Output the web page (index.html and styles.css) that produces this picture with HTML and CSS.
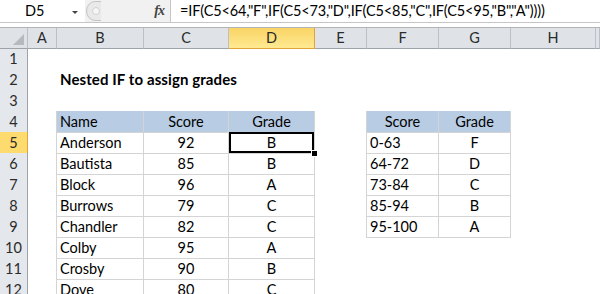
FILE: index.html
```html
<!DOCTYPE html>
<html lang="en">
<head>
    <meta charset="UTF-8">
    <title>Nested IF to assign grades</title>
    <link rel="stylesheet" href="styles.css">
</head>
<body>
    <div class="fbar">
        <div class="namebox">
            <span class="ref">D5</span>
            <span class="drop"></span>
        </div>
        <div class="fbtools">
            <svg class="grip" width="16" height="20" viewBox="0 0 16 20">
                <path d="M15 0.5 H9 A8.5 9.5 0 0 0 9 19.5 H15" fill="#e9e9e9" stroke="#c4c4c4"/>
                <circle cx="10" cy="10" r="3.5" fill="#f6f6f6" stroke="#d2d2d2"/>
            </svg>
            <span class="fx">fx</span>
        </div>
        <div class="formula">=IF(C5&lt;64,"F",IF(C5&lt;73,"D",IF(C5&lt;85,"C",IF(C5&lt;95,"B","A"))))</div>
    </div>
    <div class="fgap"></div>

    <div class="sheet">
        <div class="row colheads">
            <div class="corner"></div>
            <div class="ch">A</div>
            <div class="ch">B</div>
            <div class="ch">C</div>
            <div class="ch active">D</div>
            <div class="ch">E</div>
            <div class="ch">F</div>
            <div class="ch">G</div>
            <div class="ch">H</div>
            <div class="ch"></div>
        </div>

        <div class="row">
            <div class="rh">1</div>
            <div class="c"></div><div class="c"></div><div class="c"></div><div class="c"></div>
            <div class="c"></div><div class="c"></div><div class="c"></div><div class="c"></div><div class="c"></div>
        </div>
        <div class="row">
            <div class="rh">2</div>
            <div class="c"></div>
            <div class="c title">Nested IF to assign grades</div>
            <div class="c"></div><div class="c"></div><div class="c"></div>
            <div class="c"></div><div class="c"></div><div class="c"></div><div class="c"></div>
        </div>
        <div class="row">
            <div class="rh">3</div>
            <div class="c"></div>
            <div class="c tt"></div><div class="c tt"></div><div class="c tt"></div>
            <div class="c"></div>
            <div class="c tt"></div><div class="c tt"></div>
            <div class="c"></div><div class="c"></div>
        </div>
        <div class="row">
            <div class="rh">4</div>
            <div class="c tl"></div>
            <div class="c t th">Name</div>
            <div class="c t th ctr">Score</div>
            <div class="c t th ctr">Grade</div>
            <div class="c tl"></div>
            <div class="c t th ctr">Score</div>
            <div class="c t th ctr">Grade</div>
            <div class="c"></div><div class="c"></div>
        </div>
        <div class="row">
            <div class="rh active">5</div>
            <div class="c tl"></div>
            <div class="c t">Anderson</div>
            <div class="c t ctr">92</div>
            <div class="c t ctr sel">B</div>
            <div class="c tl"></div>
            <div class="c t">0-63</div>
            <div class="c t ctr">F</div>
            <div class="c"></div><div class="c"></div>
        </div>
        <div class="row">
            <div class="rh">6</div>
            <div class="c tl"></div>
            <div class="c t">Bautista</div>
            <div class="c t ctr">85</div>
            <div class="c t ctr">B</div>
            <div class="c tl"></div>
            <div class="c t">64-72</div>
            <div class="c t ctr">D</div>
            <div class="c"></div><div class="c"></div>
        </div>
        <div class="row">
            <div class="rh">7</div>
            <div class="c tl"></div>
            <div class="c t">Block</div>
            <div class="c t ctr">96</div>
            <div class="c t ctr">A</div>
            <div class="c tl"></div>
            <div class="c t">73-84</div>
            <div class="c t ctr">C</div>
            <div class="c"></div><div class="c"></div>
        </div>
        <div class="row">
            <div class="rh">8</div>
            <div class="c tl"></div>
            <div class="c t">Burrows</div>
            <div class="c t ctr">79</div>
            <div class="c t ctr">C</div>
            <div class="c tl"></div>
            <div class="c t">85-94</div>
            <div class="c t ctr">B</div>
            <div class="c"></div><div class="c"></div>
        </div>
        <div class="row">
            <div class="rh">9</div>
            <div class="c tl"></div>
            <div class="c t">Chandler</div>
            <div class="c t ctr">82</div>
            <div class="c t ctr">C</div>
            <div class="c tl"></div>
            <div class="c t">95-100</div>
            <div class="c t ctr">A</div>
            <div class="c"></div><div class="c"></div>
        </div>
        <div class="row">
            <div class="rh">10</div>
            <div class="c tl"></div>
            <div class="c t">Colby</div>
            <div class="c t ctr">95</div>
            <div class="c t ctr">A</div>
            <div class="c"></div><div class="c"></div><div class="c"></div><div class="c"></div><div class="c"></div>
        </div>
        <div class="row">
            <div class="rh">11</div>
            <div class="c tl"></div>
            <div class="c t">Crosby</div>
            <div class="c t ctr">90</div>
            <div class="c t ctr">B</div>
            <div class="c"></div><div class="c"></div><div class="c"></div><div class="c"></div><div class="c"></div>
        </div>
        <div class="row">
            <div class="rh">12</div>
            <div class="c tl"></div>
            <div class="c t">Dove</div>
            <div class="c t ctr">80</div>
            <div class="c t ctr">C</div>
            <div class="c"></div><div class="c"></div><div class="c"></div><div class="c"></div><div class="c"></div>
        </div>
    </div>
</body>
</html>
```

FILE: styles.css
```css
body {
    margin: 0;
    font-family: 'Lato', 'Open Sans', sans-serif;
    font-size: 14.5px;
    color: #000;
    background-color: #ffffff;
    overflow: hidden;
}

/* formula bar */

.fbar {
    display: flex;
    height: 22px;
    border-bottom: 1px solid #c6c6c6;
}

.namebox {
    width: 85px;
    position: relative;
    display: flex;
    align-items: center;
}

.ref {
    margin-left: 25px;
    line-height: 22px;
}

.drop {
    position: absolute;
    left: 72px;
    top: 11px;
    border-left: 3px solid transparent;
    border-right: 3px solid transparent;
    border-top: 3px solid #444;
}

.fbtools {
    width: 86px;
    display: flex;
    align-items: center;
    justify-content: space-between;
    background-color: #f1f1f1;
    border-right: 1px solid #c6c6c6;
    box-sizing: border-box;
}

.grip {
    margin-left: 1px;
}

.fx {
    font-family: 'Liberation Serif', serif;
    font-style: italic;
    font-weight: bold;
    font-size: 14px;
    color: #444;
    margin-right: 6px;
    letter-spacing: -1px;
}

.formula {
    flex: 1;
    padding-left: 9px;
    line-height: 22px;
    letter-spacing: -0.15px;
    white-space: nowrap;
    overflow: hidden;
}

.fgap {
    height: 4px;
    border-bottom: 1px solid #b4b4b4;
}

/* grid */

.row {
    display: grid;
    grid-template-columns: 28px 29px 87px 85px 86px 52px 72px 72px 85px 1fr;
    height: 21px;
    line-height: 21px;
}

.colheads {
    height: 20px;
    line-height: 20px;
}

.colheads > div {
    background-color: #dfe3e8;
    border-right: 1px solid #bcc0c6;
    border-bottom: 1px solid #9ea3aa;
    text-align: center;
    color: #2b2b2b;
    box-sizing: border-box;
}

.corner {
    position: relative;
}

.corner::after {
    content: "";
    position: absolute;
    right: 3px;
    bottom: 3px;
    border-left: 11px solid transparent;
    border-bottom: 11px solid #b6bac0;
}

.ch.active {
    background: linear-gradient(#f9d465, #ffe991);
    border-right-color: #e2a33a;
    border-bottom: 1px solid #e2a33a;
}

.rh {
    background-color: #e4e7ec;
    border-right: 1px solid #9ea3aa;
    border-bottom: 1px solid #c5c9cf;
    text-align: center;
    color: #2b2b2b;
    box-sizing: border-box;
}

.rh.active {
    background-color: #fedb6e;
    border-right-color: #e2a33a;
    border-bottom-color: #e2a33a;
}

.c {
    box-sizing: border-box;
    padding: 0 3px;
    white-space: nowrap;
    position: relative;
}

.title {
    font-weight: bold;
    font-size: 15px;
    letter-spacing: 0.1px;
    overflow: visible;
}

.tt {
    border-bottom: 1px solid #d4d4d4;
}

.tl {
    border-right: 1px solid #d4d4d4;
}

.t {
    border-right: 1px solid #d4d4d4;
    border-bottom: 1px solid #d4d4d4;
}

.th {
    background-color: #b8cce4;
}

.ctr {
    text-align: center;
}

.sel {
    box-shadow: inset 0 0 0 2px #000;
    z-index: 2;
}

.sel::after {
    content: "";
    position: absolute;
    right: -4px;
    bottom: -4px;
    width: 5px;
    height: 5px;
    background-color: #000;
    border: 1px solid #fff;
}
```
